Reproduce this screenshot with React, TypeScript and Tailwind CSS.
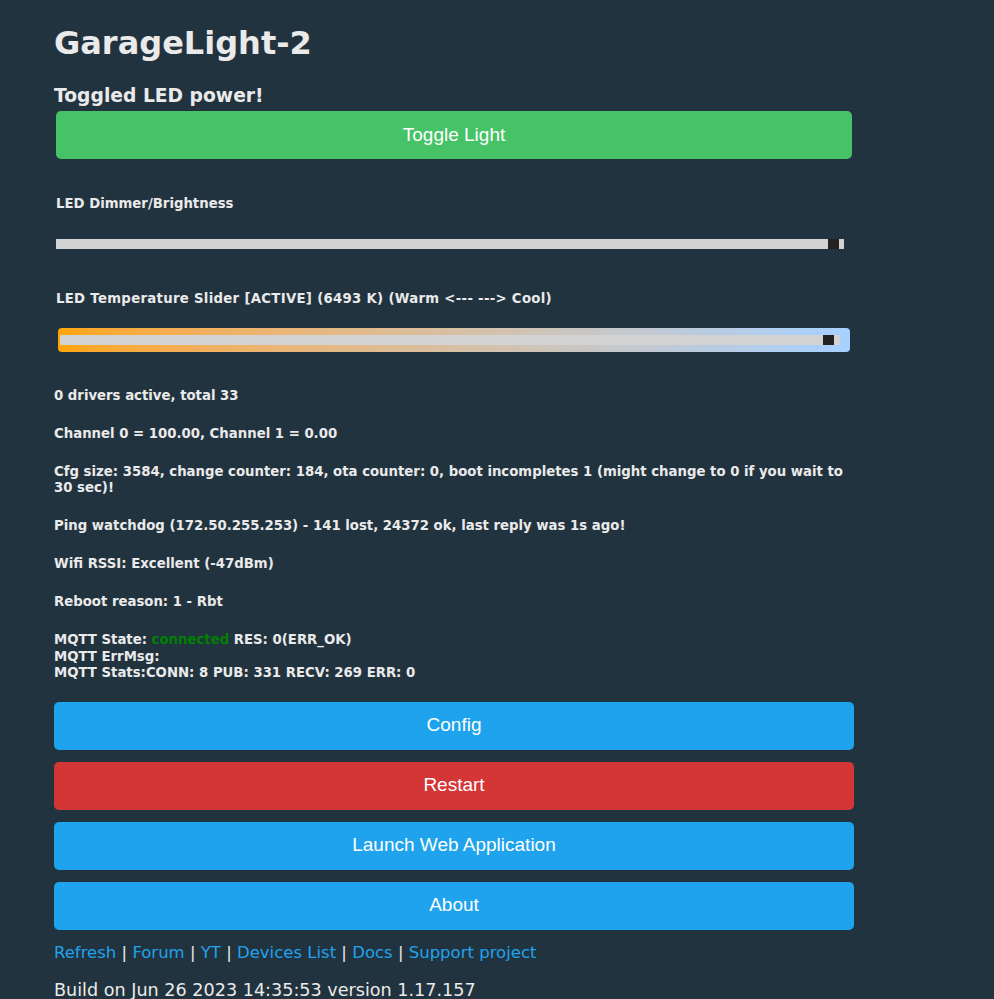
import type { ReactNode } from "react"

const font = { fontFamily: '"DejaVu Sans", Verdana, sans-serif' }
const btnFont = { fontFamily: '"Liberation Sans", Arial, sans-serif' }

function Info({ children }: { children: ReactNode }) {
  return <h5 className="mb-[22px] text-[13.28px] font-bold leading-[16px]">{children}</h5>
}

function Button({ label, color }: { label: string; color: string }) {
  return (
    <button
      type="button"
      style={btnFont}
      className={`h-[48px] w-full rounded-[5px] text-[19px] text-white ${color}`}
    >
      {label}
    </button>
  )
}

const links = ["Refresh", "Forum", "YT", "Devices List", "Docs", "Support project"]

export default function App() {
  return (
    <div style={font} className="min-h-[999px] bg-[#223340] text-[#eaeaea]">
      <div className="w-[854px] pl-[54px] pt-[24px]">
        <h1 className="text-[32px] font-bold leading-[38px] text-[#eaeaea]">GarageLight-2</h1>

        <h3 className="mt-[23px] text-[18.72px] font-bold leading-[22px]">Toggled LED power!</h3>

        <div className="mt-[4px] px-[2px]">
          <button
            type="button"
            style={btnFont}
            className="h-[48px] w-full rounded-[5px] bg-[#46c267] text-[19px] text-white"
          >
            Toggle Light
          </button>
        </div>

        <div className="mt-[37px] pl-[2px] text-[13.28px] font-bold leading-[16px]">LED Dimmer/Brightness</div>

        <div className="ml-[2px] mt-[27px] flex h-[10px] w-[788px] bg-[#d3d3d3]">
          <div className="flex-1" />
          <div className="w-[11px] bg-[#222222]" />
          <div className="w-[5px]" />
        </div>

        <div className="mt-[42px] pl-[2px] text-[13.28px] font-bold leading-[16px] tracking-[0.3px]">
          LED Temperature Slider [ACTIVE] (6493 K) (Warm &lt;--- ---&gt; Cool)
        </div>

        <div className="ml-[4px] mt-[21px] w-[792px] rounded-[4px] bg-gradient-to-r from-[#ffa500] to-[#a6d1ff] py-[7px] pl-[2px] pr-[10px]">
          <div className="flex h-[10px] bg-[#d3d3d3]">
            <div className="flex-1" />
            <div className="w-[11px] bg-[#222222]" />
            <div className="w-[6px]" />
          </div>
        </div>

        <div className="mt-[36px]">
          <Info>0 drivers active, total 33</Info>
          <Info>Channel 0 = 100.00, Channel 1 = 0.00</Info>
          <Info>
            Cfg size: 3584, change counter: 184, ota counter: 0, boot incompletes 1 (might change to 0 if you wait to
            30 sec)!
          </Info>
          <Info>Ping watchdog (172.50.255.253) - 141 lost, 24372 ok, last reply was 1s ago!</Info>
          <Info>Wifi RSSI: Excellent (-47dBm)</Info>
          <Info>Reboot reason: 1 - Rbt</Info>
          <h5 className="text-[13.28px] font-bold leading-[16.5px]">
            MQTT State: <span className="text-[#008000]">connected</span> RES: 0(ERR_OK)
            <br />
            MQTT ErrMsg:
            <br />
            MQTT Stats:CONN: 8 PUB: 331 RECV: 269 ERR: 0
          </h5>
        </div>

        <div className="mt-[20px] flex flex-col gap-[12px]">
          <Button label="Config" color="bg-[#1fa3ec]" />
          <Button label="Restart" color="bg-[#d43535]" />
          <Button label="Launch Web Application" color="bg-[#1fa3ec]" />
          <Button label="About" color="bg-[#1fa3ec]" />
        </div>

        <div className="mt-[13px] text-[16.5px] leading-[20px]">
          {links.map((l, i) => (
            <span key={l}>
              {i > 0 && <span> | </span>}
              <a className="text-[#1fa3ec]">{l}</a>
            </span>
          ))}
        </div>

        <div className="mt-[17px] text-[17.6px] leading-[20px]">Build on Jun 26 2023 14:35:53 version 1.17.157</div>
      </div>
    </div>
  )
}
